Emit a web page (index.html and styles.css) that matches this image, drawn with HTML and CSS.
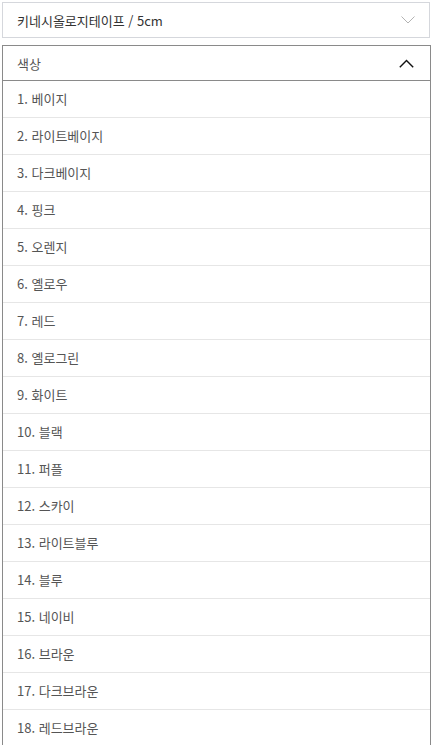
FILE: index.html
```html
<!DOCTYPE html>
<html lang="ko">
<head>
    <meta charset="UTF-8">
    <meta name="viewport" content="width=device-width, initial-scale=1.0">
    <title>옵션 선택</title>
    <link rel="stylesheet" href="styles.css">
</head>
<body>

<div class="option-box">
    <div class="option-head">
        <span>키네시올로지테이프 / 5cm</span>
        <svg class="arrow arrow-down" width="14" height="8" viewBox="0 0 14 8"><path d="M0.5 0.5 L7 7 L13.5 0.5" fill="none" stroke="#b3b3b3" stroke-width="1"/></svg>
    </div>
</div>

<div class="option-box open">
    <div class="option-head">
        <span>색상</span>
        <svg class="arrow" width="15" height="9" viewBox="0 0 15 9"><path d="M0.8 8.2 L7.5 1.5 L14.2 8.2" fill="none" stroke="#111" stroke-width="1.4"/></svg>
    </div>
    <ul class="option-list">
        <li>1. 베이지</li>
        <li>2. 라이트베이지</li>
        <li>3. 다크베이지</li>
        <li>4. 핑크</li>
        <li>5. 오렌지</li>
        <li>6. 옐로우</li>
        <li>7. 레드</li>
        <li>8. 옐로그린</li>
        <li>9. 화이트</li>
        <li>10. 블랙</li>
        <li>11. 퍼플</li>
        <li>12. 스카이</li>
        <li>13. 라이트블루</li>
        <li>14. 블루</li>
        <li>15. 네이비</li>
        <li>16. 브라운</li>
        <li>17. 다크브라운</li>
        <li>18. 레드브라운</li>
    </ul>
</div>

</body>
</html>
```

FILE: styles.css
```css
body {
    margin: 0;
    padding: 2px 1px 0 2px;
    background: #fff;
    font-family: "Noto Sans CJK KR", "Noto Sans", sans-serif;
    font-size: 13px;
}
.option-box {
    border: 1px solid #d5d7dc;
    background: #fff;
    width: 426px;
    margin-bottom: 7px;
}
.option-box.open {
    border-color: #8a8a8a;
    border-bottom: none;
    width: 427px;
}
.option-head {
    display: flex;
    align-items: center;
    justify-content: space-between;
    height: 34px;
    padding: 0 14px 0 14px;
    color: #333;
}
.open .option-head {
    color: #555;
    border-bottom: 1px solid #8a8a8a;
    padding-right: 16px;
}
.option-list {
    list-style: none;
    margin: 0;
    padding: 0;
}
.option-list li {
    height: 36px;
    line-height: 36px;
    padding-left: 14px;
    color: #555;
    border-bottom: 1px solid #e6e6e6;
}
```
